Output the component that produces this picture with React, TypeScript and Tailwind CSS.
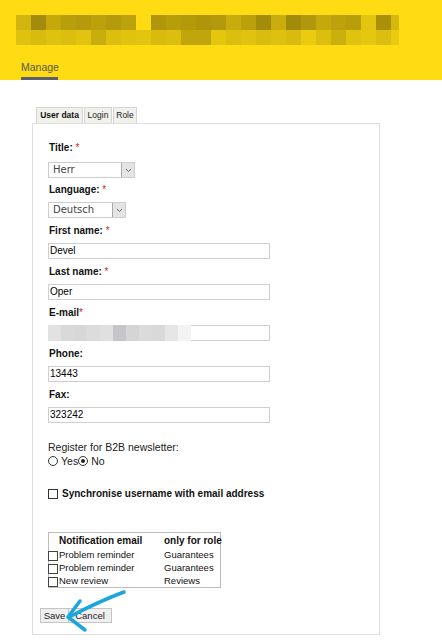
import { ReactNode } from 'react';

const MOSAIC_TOP = ['#d2b50f', '#a38c0b', '#c4a80c', '#b89e0b', '#b59b0b', '#bca10c', '#b59b0b', '#bca20c', '#fedb13', '#b0960b', '#b89d0b', '#b29a0b', '#ae950a', '#b3990b', '#c8ac0d', '#bba00c', '#a38c0a', '#c9ad0d', '#a38b0a', '#b0970b', '#c5a90c', '#bda20c', '#b89e0b', '#e3c40f', '#a99009', '#d4b80e'];
const MOSAIC_BOTTOM = ['#dfc10f', '#d9bb0e', '#dfc10f', '#dcbe0f', '#e2c30f', '#c9ad0c', '#dcbe0f', '#e0c20f', '#e3c40f', '#d9bb0e', '#dcbe0f', '#c0a50c', '#c0a50c', '#e5c60f', '#dcbe0f', '#e0c20f', '#dabc0e', '#dec00f', '#d9bb0e', '#ebcb10', '#dcbe0e', '#cbaf0c', '#e0c20f', '#e6c70f', '#dcbe0e', '#eaca10'];
const EMAIL_BLUR = ['#e2e2e2', '#d9d9d9', '#d7d7d7', '#dcdcdc', '#e0e0e0', '#c6c6ca', '#d5d5d5', '#dbdbdb', '#d9d9d9', '#e6e6e6', '#f3f3f3'];

const NOTIFICATIONS = [
  { name: 'Problem reminder', role: 'Guarantees' },
  { name: 'Problem reminder', role: 'Guarantees' },
  { name: 'New review', role: 'Reviews' },
];

const MosaicRow = ({ colors }: { colors: string[] }) => (
  <div className="flex w-[383px] h-[15px] overflow-hidden">
    {colors.map((c, i) => (
      <div key={i} className="w-[15px] h-[15px] shrink-0" style={{ backgroundColor: c }} />
    ))}
  </div>
);

const Label = ({ children, required, className }: { children: ReactNode; required?: boolean; className?: string }) => (
  <p className={`pl-[1px] text-[10px] leading-[12px] font-bold text-[#111] ${className ?? ''}`}>
    {children}
    {required && <span className="text-[#e02020] font-normal"> *</span>}
  </p>
);

const Select = ({ value, width }: { value: string; width: string }) => (
  <div className={`${width} h-[16px] flex border border-[#cdcdcd] bg-white`}>
    <span className="grow pl-[4px] text-[10px] leading-[14px] text-[#444] font-['DejaVu_Sans',sans-serif]">{value}</span>
    <span className="w-[13px] h-[14px] flex items-center justify-center bg-[#e4e4e4] border-l border-[#a9a9a9]">
      <svg width="7" height="5" viewBox="0 0 7 5" fill="none">
        <path d="M1 1l2.5 2.5L6 1" stroke="#666" strokeWidth="1" />
      </svg>
    </span>
  </div>
);

const TextField = ({ value, className }: { value: string; className?: string }) => (
  <div className={`w-[222px] h-[16px] border border-[#cfcfcf] bg-white pl-[1px] text-[10px] leading-[14px] text-black ${className ?? ''}`}>
    {value}
  </div>
);

const Box = ({ className }: { className?: string }) => (
  <span className={`inline-block w-[10px] h-[10px] border border-[#333] bg-white shrink-0 ${className ?? ''}`} />
);

const Radio = ({ checked }: { checked?: boolean }) => (
  <span className="w-[10px] h-[10px] rounded-full border border-[#333] bg-white flex items-center justify-center shrink-0">
    {checked && <span className="w-[4px] h-[4px] rounded-full bg-[#222]" />}
  </span>
);

export default function App() {
  return (
    <div className="relative w-[442px] h-[644px] bg-white font-['Liberation_Sans',Arial,sans-serif] overflow-hidden">
      {/* Header */}
      <header className="h-[80px] bg-[#fedb13] pt-[15px] pl-[16px]">
        <MosaicRow colors={MOSAIC_TOP} />
        <MosaicRow colors={MOSAIC_BOTTOM} />
        <div className="ml-[5px] mt-[16px] w-[37px]">
          <p className="text-[10.5px] leading-[12px] text-[#5b5944] whitespace-nowrap">Manage</p>
          <div className="mt-[4px] h-[3px] w-[37px] bg-[#5d5f6c]" />
        </div>
      </header>

      <div className="ml-[32px] mt-[27px] w-[348px]">
        {/* Tabs */}
        <div className="flex gap-[1px] ml-[4px] text-[8.5px] leading-[15px]">
          <div className="w-[47px] h-[16px] border border-b-0 border-[#d6d6d6] bg-[#f1f1ec] text-center font-bold text-[#111]">User data</div>
          <div className="w-[28px] h-[16px] border border-b-0 border-[#d6d6d6] bg-[#f1f1ec] text-center text-[#222]">Login</div>
          <div className="w-[24px] h-[16px] border border-b-0 border-[#d6d6d6] bg-[#f1f1ec] text-center text-[#222]">Role</div>
        </div>

        {/* Panel */}
        <div className="h-[512px] border border-[#dddddd] bg-white">
          <div className="pl-[15px] pt-[18px] flex flex-col">
            <Label required>Title:</Label>
            <Select value="Herr" width="w-[87px] mt-[8px]" />
            <Label required className="mt-[6px]">Language:</Label>
            <Select value="Deutsch" width="w-[78px] mt-[6px]" />

            <Label required className="mt-[7px]">First name:</Label>
            <TextField value="Devel" className="mt-[6px]" />
            <Label required className="mt-[7px]">Last name:</Label>
            <TextField value="Oper" className="mt-[6px]" />
            <p className="mt-[7px] pl-[1px] text-[10px] leading-[12px] font-bold text-[#111]">
              E-mail<span className="text-[#e02020] font-normal">*</span>
            </p>
            <div className="mt-[6px] w-[222px] h-[16px] border border-[#cfcfcf] bg-white relative">
              <div className="absolute -left-[1px] -top-[1px] flex h-[16px]">
                {EMAIL_BLUR.map((c, i) => (
                  <div key={i} className="w-[13px] h-[16px]" style={{ backgroundColor: c }} />
                ))}
              </div>
            </div>
            <Label className="mt-[7px]">Phone:</Label>
            <TextField value="13443" className="mt-[6px]" />
            <Label className="mt-[7px]">Fax:</Label>
            <TextField value="323242" className="mt-[6px]" />

            {/* Newsletter */}
            <p className="mt-[18px] text-[10.5px] leading-[12px] text-[#222]">Register for B2B newsletter:</p>
            <div className="mt-[2px] h-[12px] flex items-center text-[10.5px] leading-[12px] text-[#222]">
              <Radio />
              <span className="ml-[3px]">Yes</span>
              <Radio checked />
              <span className="ml-[3px]">No</span>
            </div>

            <div className="mt-[21px] h-[12px] flex items-center">
              <Box />
              <span className="ml-[4px] text-[10px] leading-[12px] font-bold text-[#111]">Synchronise username with email address</span>
            </div>

            {/* Notifications */}
            <div className="mt-[32px] w-[173px] border border-[#bdbdbd] text-[9.5px] leading-[13px] text-[#111]">
              <div className="grid grid-cols-[115px_1fr] h-[15px] items-center font-bold text-[10px]">
                <span className="pl-[10px] whitespace-nowrap">Notification email</span>
                <span className="whitespace-nowrap">only for role</span>
              </div>
              {NOTIFICATIONS.map((n, i) => (
                <div key={i} className="grid grid-cols-[115px_1fr] h-[13px]">
                  <span className="flex items-start whitespace-nowrap -ml-[1px]">
                    <Box className="mt-[3px] border-[#444]" />
                    <span className="ml-[1px]">{n.name}</span>
                  </span>
                  <span>{n.role}</span>
                </div>
              ))}
            </div>
          </div>

          {/* Buttons */}
          <div className="mt-[20px] ml-[7px] flex text-[9.5px] leading-[13px] text-[#222]">
            <button className="w-[29px] h-[15px] border border-[#c4c4c4] bg-[#efefef]">Save</button>
            <button className="w-[43px] h-[15px] border border-l-0 border-[#c4c4c4] bg-[#efefef]">Cancel</button>
          </div>
        </div>
      </div>

      {/* Annotation arrow */}
      <svg className="absolute left-0 top-0 pointer-events-none" width="442" height="644" viewBox="0 0 442 644" fill="none">
        <path d="M124 592 Q102 600 69 617" stroke="#1aa6dd" strokeWidth="3.5" strokeLinecap="round" />
        <path d="M80 601 L68 617 L85 630" stroke="#1aa6dd" strokeWidth="3.5" strokeLinecap="round" strokeLinejoin="round" />
      </svg>
    </div>
  );
}
